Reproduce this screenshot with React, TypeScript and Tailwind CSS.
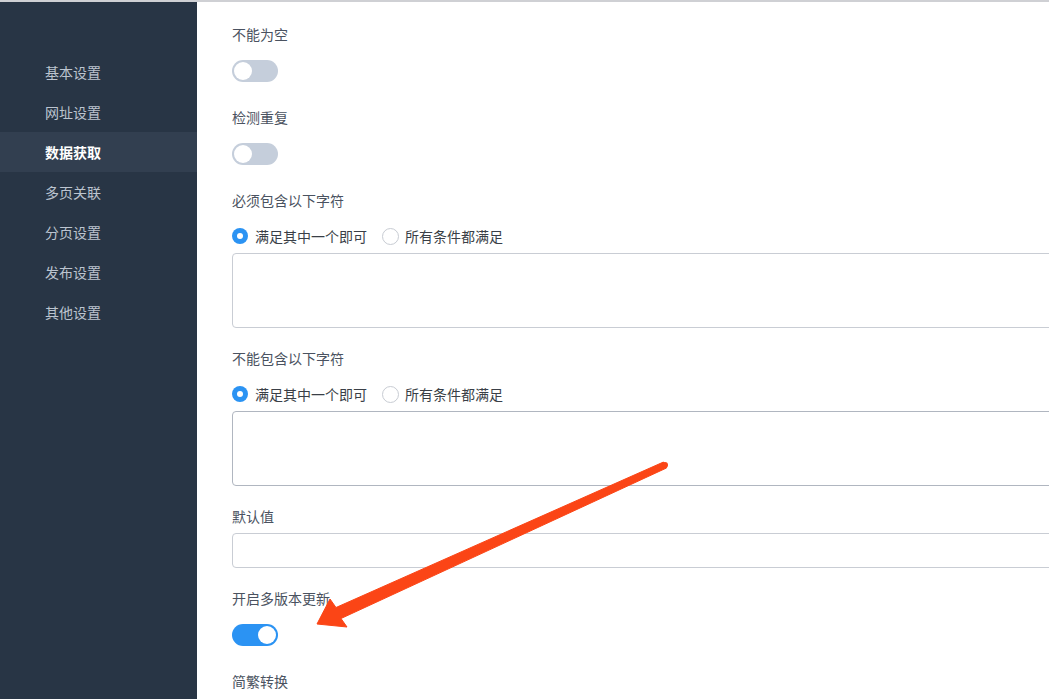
const menu = ["基本设置", "网址设置", "数据获取", "多页关联", "分页设置", "发布设置", "其他设置"];

function Toggle({ on }: { on?: boolean }) {
  return (
    <div
      className={`relative h-[22px] w-[46px] rounded-full ${on ? "bg-[#2b93f3]" : "bg-[#c5cedb]"}`}
    >
      <div
        className={`absolute top-[2px] h-[18px] w-[18px] rounded-full bg-white ${on ? "left-[26px]" : "left-[2px]"}`}
      />
    </div>
  );
}

function Radios() {
  return (
    <div className="flex h-5 items-center mb-[7px] text-[14px] text-[#3a3f47]">
      <span className="mr-[7px] flex h-4 w-4 items-center justify-center rounded-full bg-[#2b93f3]">
        <span className="h-[6px] w-[6px] rounded-full bg-white" />
      </span>
      <span className="mr-[15px]">满足其中一个即可</span>
      <span className="mr-[6px] h-[17px] w-[17px] rounded-full border border-[#c8ccd3] bg-white" />
      <span>所有条件都满足</span>
    </div>
  );
}

function Label({ text, tight }: { text: string; tight?: boolean }) {
  return (
    <div className={`${tight ? "mb-[7px]" : "mb-4"} h-5 leading-5 text-[14px] text-[#4a5260]`}>
      {text}
    </div>
  );
}

export default function App() {
  return (
    <div
      className="relative flex h-[699px] w-[1049px] overflow-hidden border-t-2 border-[#cfd0d4] bg-white"
      style={{ fontFamily: '"Noto Sans CJK SC", "Noto Sans", sans-serif' }}
    >
      <aside className="w-[197px] shrink-0 bg-[#283545] pt-[50px]">
        {menu.map((m) => (
          <div
            key={m}
            className={`flex h-10 items-center pl-[45px] text-[14px] ${
              m === "数据获取" ? "bg-[#323f50] font-bold text-white" : "text-[#bcc4cf]"
            }`}
          >
            {m}
          </div>
        ))}
      </aside>

      <main className="flex-1 pl-[35px] pt-[22px]">
        <div className="mb-[25px]">
          <Label text="不能为空" />
          <Toggle />
        </div>
        <div className="mb-[25px]">
          <Label text="检测重复" />
          <Toggle />
        </div>
        <div className="mb-5">
          <Label text="必须包含以下字符" />
          <Radios />
          <textarea className="block h-[75px] w-[900px] resize-none rounded border border-[#c9cdd4]" />
        </div>
        <div className="mb-5">
          <Label text="不能包含以下字符" />
          <Radios />
          <textarea className="block h-[75px] w-[900px] resize-none rounded border border-[#b0b6c0]" />
        </div>
        <div className="mb-5">
          <Label text="默认值" tight />
          <input className="block h-[35px] w-[900px] rounded border border-[#c9cdd4]" />
        </div>
        <div className="mb-[25px]">
          <Label text="开启多版本更新" />
          <Toggle on />
        </div>
        <div>
          <Label text="简繁转换" />
        </div>
      </main>

      <svg className="pointer-events-none absolute left-0 top-0" width="1049" height="699">
        <polygon
          points="666.5,466 663.5,460 336,605.5 330,597 317,622 347,625 341,616.5"
          fill="#fb4516"
          stroke="#fb4516"
          strokeWidth="1"
          strokeLinejoin="round"
        />
        <circle cx="665" cy="463" r="3" fill="#fb4516" />
      </svg>
    </div>
  );
}
